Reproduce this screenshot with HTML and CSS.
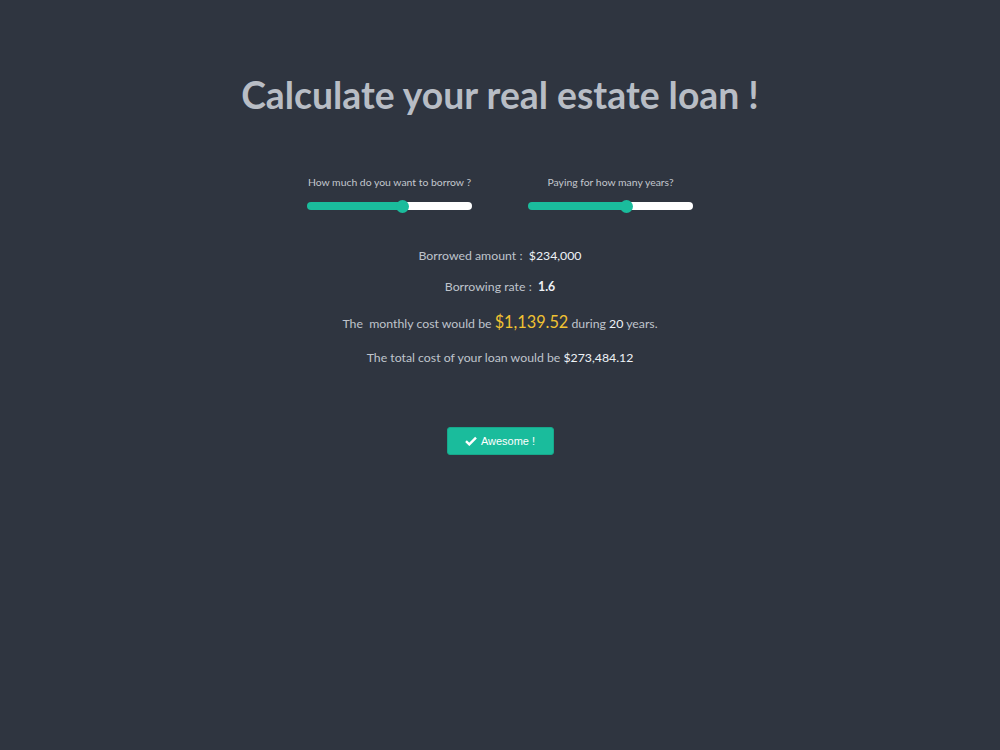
FILE: index.html
```html
<!DOCTYPE html>
<html lang="en">
<head>
    <meta charset="UTF-8">
    <meta name="viewport" content="width=device-width, initial-scale=1.0">
    <title>Real estate loan</title>
    <link rel="stylesheet" href="styles.css">
</head>
<body>
    <main class="app">
        <h1 class="title">Calculate your real estate loan !</h1>

        <div class="sliders">
            <div class="slider">
                <label for="amount">How much do you want to borrow ?</label>
                <input type="range" id="amount" min="0" max="400000" value="234000" style="background: linear-gradient(to right, #1abc9c 58%, #fff 58%);">
            </div>
            <div class="slider">
                <label for="years">Paying for how many years?</label>
                <input type="range" id="years" min="0" max="33" value="20" style="background: linear-gradient(to right, #1abc9c 60%, #fff 60%);">
            </div>
        </div>

        <div class="results">
            <p>Borrowed amount :&nbsp; <span class="val">$234,000</span></p>
            <p>Borrowing rate :&nbsp; <strong class="val">1.6</strong></p>
            <p class="monthly">The&nbsp; monthly cost would be <span class="price">$1,139.52</span> during <span class="val">20</span> years.</p>
            <p>The total cost of your loan would be <span class="val">$273,484.12</span></p>
        </div>

        <button class="btn">
            <svg width="12" height="10" viewBox="0 0 12 10"><path d="M1 5.2 L4.3 8.4 L11 1.6" fill="none" stroke="#fff" stroke-width="2.4"/></svg>
            Awesome !
        </button>
    </main>
</body>
</html>
```

FILE: styles.css
```css
html, body {
    margin: 0;
    background-color: #2f3540;
    font-family: Lato, "Open Sans", sans-serif;
    color: #bfc4cc;
}
.app {
    display: flex;
    flex-direction: column;
    align-items: center;
    padding-top: 69px;
}
.title {
    margin: 0;
    font-size: 37.3px;
    font-weight: 700;
    color: #b8bdc5;
    line-height: 52px;
}

/* sliders */
.sliders {
    display: flex;
    gap: 56px;
    margin-top: 54px;
}
.slider {
    width: 165px;
    display: flex;
    flex-direction: column;
    align-items: center;
}
.slider label {
    font-size: 10.4px;
    line-height: 14px;
    white-space: nowrap;
    color: #c3c7ce;
}
.slider input {
    -webkit-appearance: none;
    appearance: none;
    width: 165px;
    height: 8px;
    margin: 13px 0 0;
    border-radius: 4px;
    outline: none;
}
.slider input::-webkit-slider-thumb {
    -webkit-appearance: none;
    width: 13px;
    height: 13px;
    border-radius: 50%;
    background-color: #1abc9c;
    cursor: pointer;
}

/* results */
.results {
    margin-top: 38px;
    text-align: center;
    font-size: 12.3px;
}
.results p {
    margin: 0 0 15px;
    line-height: 16px;
}
.results p.monthly {
    margin: 19px 0 18px;
}
.val {
    color: #eef2f6;
}
strong.val {
    font-weight: 700;
}
.price {
    color: #f1c232;
    font-size: 16.3px;
}

/* button */
.btn {
    margin-top: 46px;
    width: 107px;
    height: 28px;
    display: flex;
    align-items: center;
    justify-content: center;
    gap: 4px;
    border: 1px solid #17a88b;
    border-radius: 3px;
    background-color: #1abc9c;
    color: #fff;
    font-family: "Liberation Sans", Arial, sans-serif;
    font-size: 11px;
    cursor: pointer;
}
```
